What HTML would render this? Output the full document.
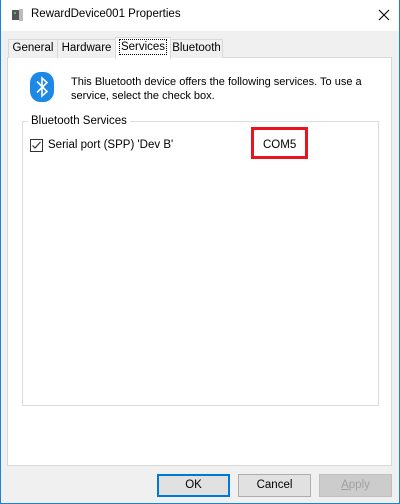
<!DOCTYPE html>
<html><head><style>
*{margin:0;padding:0;box-sizing:border-box}
body{width:400px;height:504px;overflow:hidden;font-family:"Liberation Sans",sans-serif;font-size:11px;color:#000;background:#f0f0f0;position:relative}
.abs{position:absolute}
#win{left:0;top:0;width:400px;height:504px;border:1px solid #1883d7;background:#f0f0f0}
#title{left:1px;top:0;width:398px;height:31px;background:#fff}
.tab{position:absolute;top:39px;height:19px;border:1px solid #d9d9d9;border-bottom:none;background:#f0f0f0;text-align:center;line-height:17px;font-size:11.5px}
.btn{position:absolute;top:474px;width:73px;height:23px;border:1px solid #adadad;background:#e1e1e1;text-align:center;line-height:21px;font-size:11.5px}
</style></head><body>
<div id="win" class="abs"></div>
<div id="title" class="abs"></div>
<svg class="abs" style="left:10px;top:8px" width="14" height="14"><rect x="2" y="2" width="7" height="10" fill="#555"/><rect x="9" y="1" width="4" height="12" fill="#bbb"/><rect x="4" y="4" width="2" height="2" fill="#4c4"/></svg>
<div class="abs" style="left:31px;top:8px;font-size:11.5px">RewardDevice001 Properties</div>
<svg class="abs" style="left:378px;top:9px" width="12" height="12"><path d="M1 1L11 11M11 1L1 11" stroke="#000" stroke-width="1.1"/></svg>
<div class="abs" style="left:7px;top:57px;width:385px;height:409px;background:#fff;border:1px solid #d9d9d9"></div>
<div class="tab" style="left:8px;width:50px">General</div>
<div class="tab" style="left:57px;width:59px">Hardware</div>
<div class="tab" style="left:115px;top:37px;height:22px;width:56px;background:#fff;z-index:2"><span style="border:1px dotted #000;padding:0 1px;line-height:14px;display:inline-block;margin-top:1px">Services</span></div>
<div class="tab" style="left:170px;width:53px">Bluetooth</div>
<svg class="abs" style="left:30px;top:72px" width="24" height="30"><rect x="0" y="0" width="24" height="30" rx="10" ry="11" fill="#1e88e5"/><path d="M7 9.5L17 19.5L12 24V6L17 10.5L7 20.5" stroke="#fff" stroke-width="1.6" fill="none"/></svg>
<div class="abs" style="left:71px;top:75px;line-height:14px">This Bluetooth device offers the following services. To use a<br>service, select the check box.</div>
<div class="abs" style="left:22px;top:121px;width:357px;height:285px;border:1px solid #dcdcdc"></div>
<div class="abs" style="left:28px;top:115px;background:#fff;padding:0 3px;font-size:11.5px">Bluetooth Services</div>
<div class="abs" style="left:30px;top:139px;width:13px;height:13px;border:1px solid #333;background:#fff"></div>
<svg class="abs" style="left:30px;top:139px" width="13" height="13"><path d="M2.5 6.5L5 9L10.5 3" stroke="#333" stroke-width="1.2" fill="none"/></svg>
<div class="abs" style="left:48px;top:139px;font-size:11.5px">Serial port (SPP) 'Dev B'</div>
<div class="abs" style="left:251px;top:127px;width:57px;height:32px;border:3px solid #e8141e"></div>
<div class="abs" style="left:263px;top:139px;font-size:11.5px">COM5</div>
<div class="btn" style="left:157px;border:2px solid #0078d7;line-height:19px">OK</div>
<div class="btn" style="left:238px">Cancel</div>
<div class="btn" style="left:319px;background:#ccc;border-color:#bfbfbf;color:#a0a0a0"><u>A</u>pply</div>
</body></html>
